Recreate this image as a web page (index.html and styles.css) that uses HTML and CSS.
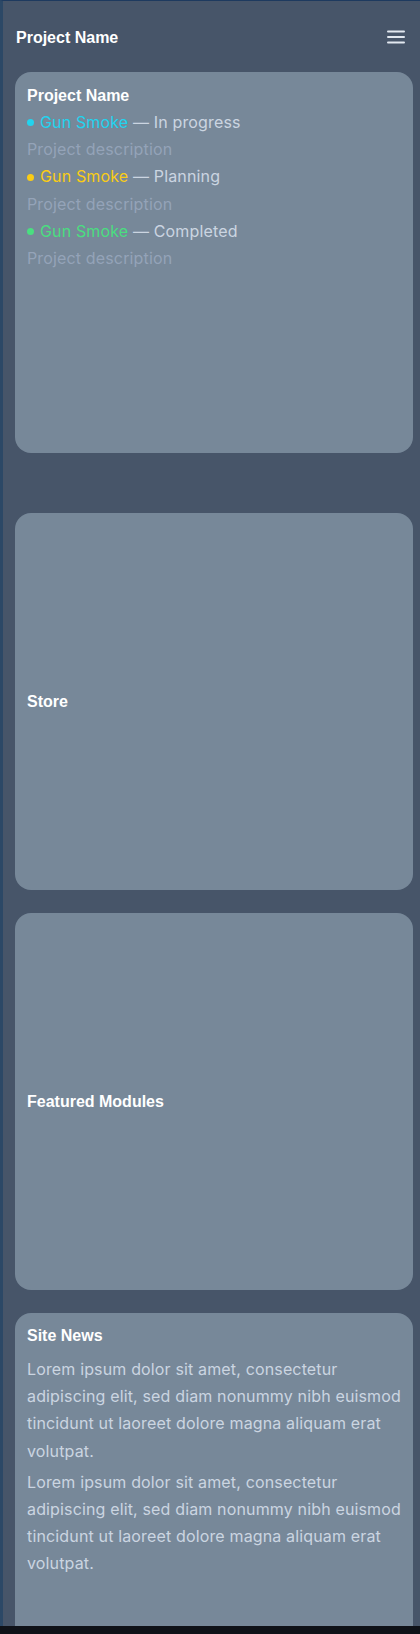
FILE: index.html
```html
<!DOCTYPE html>
<html lang="en">
<head>
<meta charset="utf-8">
<title>Project Name</title>
<link rel="stylesheet" href="styles.css">
</head>
<body>
<div class="app">
  <header class="header">
    <h1 class="brand">Project Name</h1>
    <button class="menu" aria-label="Menu">
      <svg width="18" height="14" viewBox="0 0 18 14"><rect x="0" y="0.5" width="18" height="2" rx="1" fill="#e2e8f0"/><rect x="0" y="6" width="18" height="2" rx="1" fill="#e2e8f0"/><rect x="0" y="11.5" width="18" height="2" rx="1" fill="#e2e8f0"/></svg>
    </button>
  </header>
  <main class="main">
    <section class="card card-projects">
      <h2 class="card-title">Project Name</h2>
      <div class="status"><span class="dot dot-cyan"></span><span class="name cyan">Gun Smoke</span><span class="state"> — In progress</span></div>
      <div class="desc">Project description</div>
      <div class="status"><span class="dot dot-yellow"></span><span class="name yellow">Gun Smoke</span><span class="state"> — Planning</span></div>
      <div class="desc">Project description</div>
      <div class="status"><span class="dot dot-green"></span><span class="name green">Gun Smoke</span><span class="state"> — Completed</span></div>
      <div class="desc">Project description</div>
    </section>
    <section class="card card-center">
      <h2 class="card-title">Store</h2>
    </section>
    <section class="card card-center">
      <h2 class="card-title">Featured Modules</h2>
    </section>
    <section class="card card-news">
      <h2 class="card-title">Site News</h2>
      <p class="news">Lorem ipsum dolor sit amet, consectetur adipiscing elit, sed diam nonummy nibh euismod tincidunt ut laoreet dolore magna aliquam erat volutpat.</p>
      <p class="news">Lorem ipsum dolor sit amet, consectetur adipiscing elit, sed diam nonummy nibh euismod tincidunt ut laoreet dolore magna aliquam erat volutpat.</p>
    </section>
  </main>
</div>
</body>
</html>
```

FILE: styles.css
```css
* { box-sizing: border-box; }
html, body { margin: 0; padding: 0; }
body {
  background: #0f1218;
  font-family: Inter, "Noto Sans", sans-serif;
}
.app {
  height: 1626px;
  overflow: hidden;
  background: #475569;
  border-left: 3px solid #2c4866;
  border-top: 1px solid #1e3a5f;
}
.header {
  height: 71px;
  display: flex;
  align-items: center;
  justify-content: space-between;
  padding: 2px 15px 0 13px;
}
.brand {
  margin: 0;
  font-family: "Liberation Sans", Arial, sans-serif;
  font-weight: 700;
  font-size: 16px;
  color: #ffffff;
}
.menu {
  background: none;
  border: 0;
  padding: 0;
  display: flex;
  width: 18px;
  height: 14px;
  margin-top: -2px;
}
.main {
  display: flex;
  flex-direction: column;
  gap: 23px;
  padding: 0 7px 0 12px;
}
.card {
  background: #778899;
  border-radius: 16px;
  padding: 10px 12px;
  height: 377px;
  flex-shrink: 0;
}
.card-projects {
  height: 381px;
  margin-bottom: 37px;
}
.card-title {
  margin: 0;
  font-family: "Liberation Sans", Arial, sans-serif;
  font-weight: 700;
  font-size: 16px;
  line-height: 27px;
  color: #ffffff;
}
.status {
  display: flex;
  align-items: center;
  font-size: 16px;
  line-height: 27.2px;
  letter-spacing: 0.15px;
}
.dot {
  width: 7px;
  height: 7px;
  border-radius: 50%;
  margin-right: 6px;
  flex-shrink: 0;
}
.dot-cyan { background: #22d3ee; }
.dot-yellow { background: #facc15; }
.dot-green { background: #4ade80; }
.cyan { color: #22d3ee; }
.yellow { color: #facc15; }
.green { color: #4ade80; }
.state { color: #cbd5e1; white-space: pre; }
.desc {
  font-size: 16px;
  line-height: 27.2px;
  letter-spacing: 0.15px;
  color: #94a3b8;
}
.card-center {
  display: flex;
  align-items: center;
}
.card-news {
  height: 400px;
  padding-top: 9px;
}
.news {
  margin: 7px 0 0;
  font-size: 16px;
  line-height: 27.2px;
  letter-spacing: 0.15px;
  color: #cbd5e1;
}
.news + .news { margin-top: 4px; }
```
